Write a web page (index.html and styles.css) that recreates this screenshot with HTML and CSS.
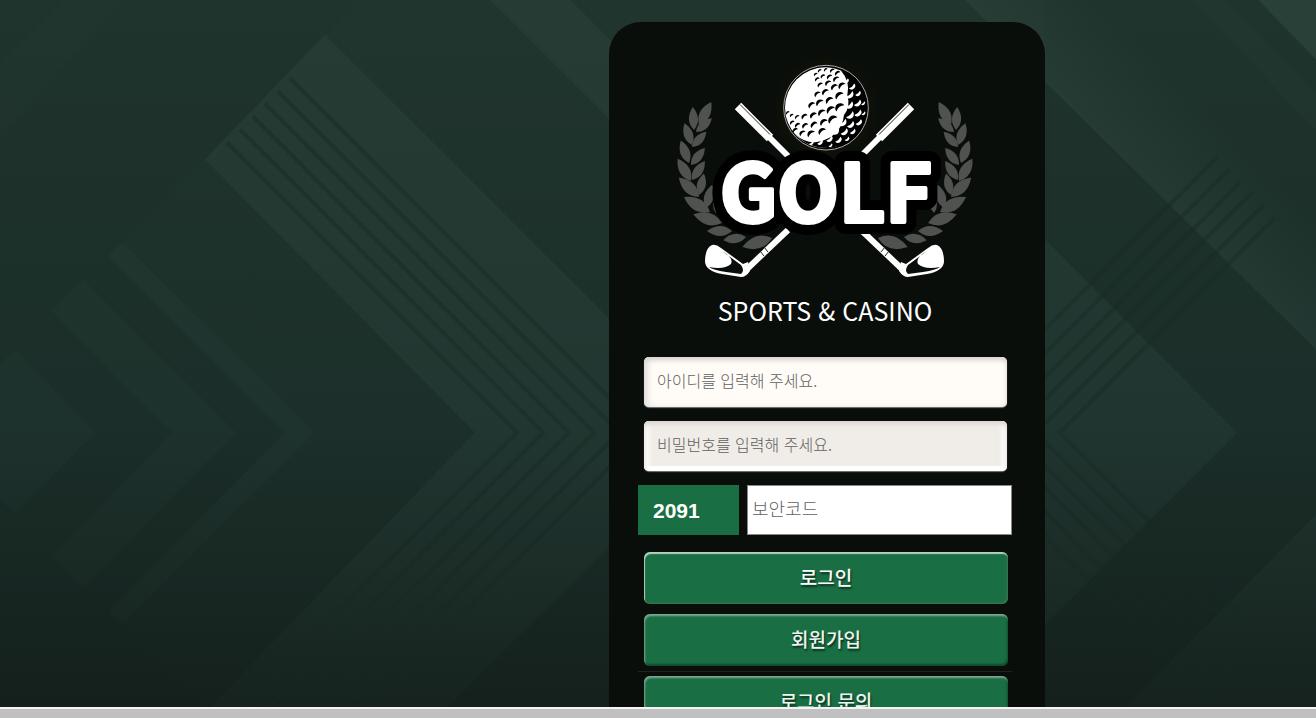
FILE: index.html
```html
<!DOCTYPE html>
<html lang="ko">
<head>
    <meta charset="UTF-8">
    <title>GOLF</title>
    <link rel="stylesheet" href="styles.css">
</head>
<body>
    <main class="page">
        <svg class="backdrop" viewBox="0 0 1316 708" preserveAspectRatio="xMidYMid slice" aria-hidden="true">
            <defs>
                <linearGradient id="base" x1="0" y1="0" x2="0" y2="1">
                    <stop offset="0" stop-color="#1f342c"/>
                    <stop offset=".6" stop-color="#1b2e29"/>
                    <stop offset="1" stop-color="#14201c"/>
                </linearGradient>
                <linearGradient id="glow" x1="0" y1="0" x2="0" y2="708" gradientUnits="userSpaceOnUse">
                    <stop offset="0" stop-color="#4a6a60" stop-opacity=".12"/>
                    <stop offset=".6" stop-color="#4a6a60" stop-opacity=".12"/>
                    <stop offset="1" stop-color="#4a6a60" stop-opacity=".03"/>
                </linearGradient>
                <linearGradient id="band" x1="1180" y1="215" x2="1245" y2="150" gradientUnits="userSpaceOnUse">
                    <stop offset="0" stop-color="#4a6a60" stop-opacity=".15"/>
                    <stop offset="1" stop-color="#4a6a60" stop-opacity="0"/>
                </linearGradient>
            </defs>
            <rect width="1316" height="708" fill="url(#base)"/>
            <g fill="url(#glow)">
                <path d="M15 350 95 433 15 515 0 500V365z" opacity=".5"/>
                <path d="M83 280 236 433 83 588 52 557 172 433 52 312z" opacity=".5"/>
                <path d="M122 243 315 433 122 625 108 612 285 433 108 257z" opacity=".7"/>
                <path d="M360 0 122 243 315 433 122 625 205 708H1045V0z" opacity=".2"/>
                <path d="M325 35 723 433 448 708H210L475 433 205 160z"/>
                <path d="M490 0H570L760 190V270z"/>
                <path d="M0 65 65 0H120L0 140z" opacity=".2"/>
                <path d="M1045 240 1237 433 1045 625z"/>
                <path d="M1258 0H1316V60z"/>
                <path d="M1258 0H1316V60z"/>
                <path d="M1190 0H1225L1316 95V130z" opacity=".35"/>
                <path d="M1316 515 1125 708H1316z"/>
            </g>
            <path d="M965 0H1160L1316 155V350L1045 82z" fill="url(#band)"/>
            <g fill="none" stroke="#182923" stroke-width="4" opacity=".42">
                <path d="M227 143 517 433 242 708"/>
                <path d="M240 130 543 433 268 708"/>
                <path d="M253 117 569 433 294 708"/>
                <path d="M265 104 594 433 319 708"/>
                <path d="M278 92 619 433 344 708"/>
                <path d="M290 79 644 433 369 708"/>
            </g>
            <g fill="none" stroke="#182923" stroke-width="4" opacity=".38">
                <path d="M1217 158 942 433 1210 701"/>
                <path d="M1229 170 966 433 1222 689"/>
                <path d="M1240 183 990 433 1234 677"/>
                <path d="M1253 192 1012 433 1246 667"/>
                <path d="M1264 205 1036 433 1258 655"/>
                <path d="M1275 218 1060 433 1270 643"/>
            </g>
        </svg>

        <section class="panel">
            <svg class="logo" viewBox="667 50 316 240" role="img" aria-label="GOLF">
                <defs>
                    <radialGradient id="halo">
                        <stop offset="0" stop-color="#201f05"/>
                        <stop offset=".6" stop-color="#151606" stop-opacity=".9"/>
                        <stop offset="1" stop-color="#0a0e0a" stop-opacity="0"/>
                    </radialGradient>
                    <path id="leaf" d="M0 0Q-8 -9 0 -20Q8 -9 0 0z"/>
                    <path id="dimple" d="M-10 8A12.500 12.500 0 1 1 10 -8Q-4 -8 -10 8z"/>
                    <path id="glint" d="M11 -8A13 13 0 0 1 -9 10Q5 6 11 -8z"/>
                    <g id="laurel">
                        <use href="#leaf" transform="translate(699 125) rotate(28) scale(1.3)"/>
                        <use href="#leaf" transform="translate(696 132) rotate(49) scale(1.05)"/>
                        <use href="#leaf" transform="translate(694 130) rotate(-3) scale(1.15)"/>
                        <use href="#leaf" transform="translate(692 145) rotate(-19) scale(1.15)"/>
                        <use href="#leaf" transform="translate(692 147) rotate(43) scale(1.05)"/>
                        <use href="#leaf" transform="translate(689 163) rotate(-20) scale(1.2)"/>
                        <use href="#leaf" transform="translate(691 165) rotate(39) scale(1.1)"/>
                        <use href="#leaf" transform="translate(691 181) rotate(-31) scale(1.3)"/>
                        <use href="#leaf" transform="translate(692 180) rotate(34) scale(1.15)"/>
                        <use href="#leaf" transform="translate(699 197) rotate(-46) scale(1.4)"/>
                        <use href="#leaf" transform="translate(699 195) rotate(13) scale(1.1)"/>
                        <use href="#leaf" transform="translate(710 212) rotate(-60) scale(1.5)"/>
                        <use href="#leaf" transform="translate(706 208) rotate(15) scale(1.2)"/>
                        <use href="#leaf" transform="translate(722 223) rotate(-73) scale(1.5)"/>
                        <use href="#leaf" transform="translate(716 213) rotate(4) scale(.9)"/>
                        <use href="#leaf" transform="translate(732 231) rotate(-90) scale(1.25)"/>
                        <use href="#leaf" transform="translate(746 237) rotate(-98) scale(1.15)"/>
                        <use href="#leaf" transform="translate(772 238) rotate(-107) scale(1.55)"/>
                    </g>
                    <!-- handle at the top left, club head at the bottom left -->
                    <g id="club">
                        <path d="M738 106 770 138" stroke="#fff" stroke-width="9"/>
                        <path d="M768 136 800 168" stroke="#fff" stroke-width="6"/>
                        <path d="M740 104.500 770 134.500" stroke="#222" stroke-width="1"/>
                        <path d="M788 230 746 270" stroke="#fff" stroke-width="6"/>
                        <path d="M764 247 768 252M760 251 764 256" stroke="#222" stroke-width="1"/>
                        <path d="M712 245Q705 248 705 262Q706 271 722 274L741 277Q746 277 750 271L748 262L743 264L721 248Q716 244 712 245z" fill="#fff"/>
                        <path d="M722 251 741 265Q745 271 741 274L726 272Q713 270 709 267Q724 270 731 264Q734 258 722 251z" fill="#0a0e0a"/>
                    </g>
                </defs>

                <circle cx="826" cy="108" r="58" fill="url(#halo)"/>
                <g fill="#50524f">
                    <use href="#laurel"/>
                    <use href="#laurel" transform="translate(1650) scale(-1 1)"/>
                </g>
                <use href="#club"/>
                <use href="#club" transform="translate(1649) scale(-1 1)"/>

                <g transform="translate(780 60) scale(.3333)">
                    <circle cx="138" cy="143" r="127" fill="#000" stroke="#aaa" stroke-width="3"/>
                    <circle cx="136" cy="143" r="121" fill="#fff"/>
                    <path d="M182 31Q262 62 259 150Q252 250 150 264Q85 266 45 222Q75 250 110 246Q150 240 168 216Q188 200 192 165Q212 140 202 105Q212 65 182 31z" fill="#000"/>
                    <g fill="#000">
                        <use href="#dimple" transform="translate(120 34) scale(.5)"/>
                        <use href="#dimple" transform="translate(138 31) scale(.5)"/>
                        <use href="#dimple" transform="translate(158 34) scale(.6)"/>
                        <use href="#dimple" transform="translate(174 42) scale(.7)"/>
                        <use href="#dimple" transform="translate(108 45) scale(.5)"/>
                        <use href="#dimple" transform="translate(113 60) scale(.6)"/>
                        <use href="#dimple" transform="translate(130 51) scale(.6)"/>
                        <use href="#dimple" transform="translate(150 53) scale(.7)"/>
                        <use href="#dimple" transform="translate(170 60) scale(.8)"/>
                        <use href="#dimple" transform="translate(122 77) scale(.7)"/>
                        <use href="#dimple" transform="translate(146 72) scale(.8)"/>
                        <use href="#dimple" transform="translate(165 84) scale(.9)"/>
                        <use href="#dimple" transform="translate(188 80)"/>
                        <use href="#dimple" transform="translate(114 105) scale(.8)"/>
                        <use href="#dimple" transform="translate(138 99) scale(.9)"/>
                        <use href="#dimple" transform="translate(180 110) scale(1.1)"/>
                        <use href="#dimple" transform="translate(97 138) scale(.9)"/>
                        <use href="#dimple" transform="translate(121 131)"/>
                        <use href="#dimple" transform="translate(150 124)"/>
                        <use href="#dimple" transform="translate(127 161)"/>
                        <use href="#dimple" transform="translate(154 153) scale(1.1)"/>
                        <use href="#dimple" transform="translate(181 145) scale(1.2)"/>
                        <use href="#dimple" transform="translate(102 169) scale(.9)"/>
                        <use href="#dimple" transform="translate(75 172) scale(.8)"/>
                        <use href="#dimple" transform="translate(53 173) scale(.6)"/>
                        <use href="#dimple" transform="translate(36 168) scale(.5)"/>
                        <use href="#dimple" transform="translate(24 160) scale(.5)"/>
                        <use href="#dimple" transform="translate(133 190)"/>
                        <use href="#dimple" transform="translate(160 182) scale(1.2)"/>
                        <use href="#dimple" transform="translate(104 197) scale(.9)"/>
                        <use href="#dimple" transform="translate(77 200) scale(.8)"/>
                        <use href="#dimple" transform="translate(54 198) scale(.7)"/>
                        <use href="#dimple" transform="translate(38 190) scale(.6)"/>
                        <use href="#dimple" transform="translate(128 217)"/>
                        <use href="#dimple" transform="translate(95 224)"/>
                        <use href="#dimple" transform="translate(69 222) scale(.8)"/>
                        <use href="#dimple" transform="translate(47 213) scale(.7)"/>
                    </g>
                    <g fill="#fff">
                        <use href="#glint" transform="translate(196 60) scale(.7)"/>
                        <use href="#glint" transform="translate(214 77) scale(.8)"/>
                        <use href="#glint" transform="translate(206 101)"/>
                        <use href="#glint" transform="translate(232 98) scale(.7)"/>
                        <use href="#glint" transform="translate(205 132)"/>
                        <use href="#glint" transform="translate(230 126) scale(.9)"/>
                        <use href="#glint" transform="translate(248 128) scale(.5)"/>
                        <use href="#glint" transform="translate(207 162)"/>
                        <use href="#glint" transform="translate(231 156) scale(.9)"/>
                        <use href="#glint" transform="translate(249 158) scale(.5)"/>
                        <use href="#glint" transform="translate(185 184)"/>
                        <use href="#glint" transform="translate(209 190) scale(.9)"/>
                        <use href="#glint" transform="translate(234 184) scale(.8)"/>
                        <use href="#glint" transform="translate(163 210)"/>
                        <use href="#glint" transform="translate(190 212) scale(.9)"/>
                        <use href="#glint" transform="translate(216 212) scale(.7)"/>
                        <use href="#glint" transform="translate(146 234) scale(.8)"/>
                        <use href="#glint" transform="translate(173 237) scale(.8)"/>
                        <use href="#glint" transform="translate(199 234) scale(.6)"/>
                        <use href="#glint" transform="translate(118 244) scale(.7)"/>
                        <use href="#glint" transform="translate(150 254) scale(.5)"/>
                        <use href="#glint" transform="translate(92 246) scale(.6)"/>
                    </g>
                </g>

                <g class="wordmark" text-anchor="middle">
                    <text class="wordmark-edge" x="826" y="222">GOLF</text>
                    <text class="wordmark-face" x="826" y="222">GOLF</text>
                </g>
            </svg>
            <h1 class="tagline">SPORTS &amp; CASINO</h1>

            <form class="login-form">
                <input class="field" type="text" aria-label="아이디" placeholder="아이디를 입력해 주세요.">
                <input class="field field-password" type="password" aria-label="비밀번호" placeholder="비밀번호를 입력해 주세요.">
                <div class="code-row">
                    <label class="code" for="code">2091</label>
                    <input class="code-input" type="text" id="code" placeholder="보안코드">
                </div>
                <button class="btn btn-login" type="submit">로그인</button>
                <button class="btn" type="button">회원가입</button>
                <hr class="divider">
                <button class="btn" type="button">로그인 문의</button>
            </form>
        </section>
    </main>
    <footer class="bottom-bar"></footer>
</body>
</html>
```

FILE: styles.css
```css
* {
    box-sizing: border-box;
}

body {
    margin: 0;
    height: 100vh;
    display: flex;
    flex-direction: column;
    background-color: #14201c;
    font-family: "Noto Sans CJK KR", sans-serif;
}

.page {
    flex: 1;
    min-height: 0;
    position: relative;
    display: flex;
    justify-content: center;
    align-items: flex-start;
    padding: 22px 0 0 338px;
    overflow: hidden;
}

/* chevron artwork behind the panel */
.backdrop {
    position: absolute;
    top: 0;
    left: 0;
    width: 100%;
    height: 100%;
}

.panel {
    position: relative;
    width: 436px;
    padding: 28px 33px 40px 29px;
    background-color: #0a0e0a;
    border-radius: 32px 32px 0 0;
}

.logo {
    display: block;
    width: 316px;
    margin: 0 auto;
}

.wordmark {
    font-family: "Noto Sans CJK KR", sans-serif;
    font-size: 80px;
    font-weight: 700;
    stroke-linejoin: round;
}

.wordmark-edge {
    fill: #000;
    stroke: #000;
    stroke-width: 24px;
}

.wordmark-face {
    fill: #fff;
    stroke: #fff;
    stroke-width: 4px;
}

.tagline {
    margin: 0;
    color: #fff;
    font-size: 25px;
    font-weight: 400;
    line-height: 40px;
    text-align: center;
}

.login-form {
    display: flex;
    flex-direction: column;
    padding-top: 27px;
}

.field {
    height: 50px;
    margin: 0 5px 14px 6px;
    padding: 0 13px 4px;
    border: none;
    border-radius: 5px;
    background-color: #fffcf8;
    box-shadow: inset 0 3px 5px #d8d2cc, inset 5px 0 6px #ebe7e3, 0 1px 1px #777;
    font-family: inherit;
    font-size: 16px;
    font-weight: 300;
}

.field-password {
    background-color: #f0ece8;
    box-shadow: inset 0 3px 5px #d8d2cc, inset 0 -5px 1px #fff, inset -5px 0 4px #fff, inset 5px 0 4px #fff, 0 1px 1px #777;
}

.code-row {
    display: flex;
    gap: 8px;
    margin-bottom: 17px;
}

.code {
    width: 101px;
    height: 50px;
    padding-left: 15px;
    background-color: #196f43;
    color: #fff;
    font-family: "Liberation Sans Narrow", "Arial Narrow", "Liberation Sans", sans-serif;
    font-size: 21px;
    font-weight: bold;
    line-height: 52px;
}

.code-input {
    flex: 1;
    min-width: 0;
    height: 50px;
    padding: 0 4px 4px;
    border: 1px solid #888;
    background-color: #fff;
    font-family: inherit;
    font-size: 18px;
    font-weight: 300;
}

.field::placeholder, .code-input::placeholder {
    color: #606060;
}

.btn {
    height: 52px;
    margin: 0 4px 10px 6px;
    padding: 0 0 3px;
    border: none;
    border-radius: 6px;
    background-color: #196f43;
    box-shadow: inset 1px 2px 2px #7fa893, inset -1px -2px 2px #104a2c;
    color: #eef5f0;
    font-family: inherit;
    font-size: 19px;
    font-weight: 500;
    text-shadow: 1px 2px 2px #0a2e1a;
    cursor: pointer;
}

.btn-login {
    box-shadow: inset 1px 2px 1px #b5d0c1, inset -1px -1px 2px #3b7657;
    color: #fff;
}

.divider {
    width: 100%;
    margin: -5px 0 4px;
    border: none;
    border-top: 1px solid #20241f;
}

.bottom-bar {
    flex: none;
    height: 11px;
    border-top: 2px solid #f4f4f4;
    background-color: #c0c0c0;
}
```
